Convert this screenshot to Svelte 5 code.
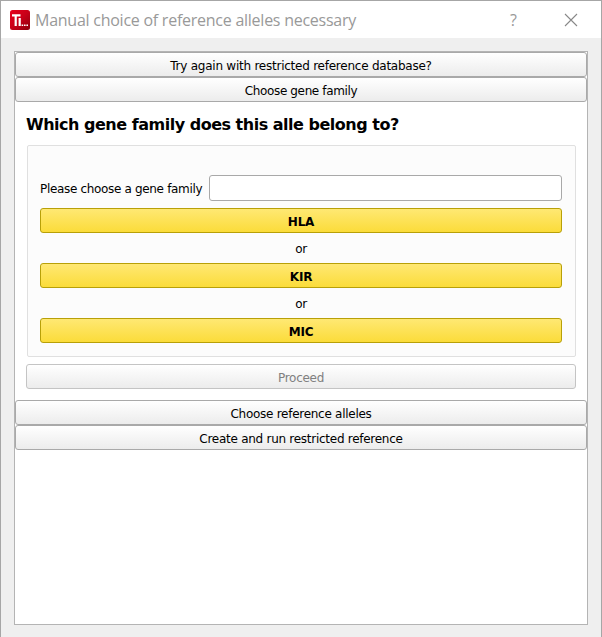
<script>
  const families = ['HLA', 'KIR', 'MIC'];
</script>

<div class="window">
  <header class="titlebar">
    <svg class="logo" width="20" height="20" viewBox="0 0 20 20">
      <defs>
        <linearGradient id="red" x1="0" y1="0" x2="1" y2="1">
          <stop offset="0" stop-color="#e8001c" />
          <stop offset=".5" stop-color="#c80018" />
          <stop offset="1" stop-color="#8c000c" />
        </linearGradient>
      </defs>
      <rect width="20" height="20" rx="2.5" fill="url(#red)" />
      <path d="M2 5.3H10.5M5.7 5V16M9.7 8V16" fill="none" stroke="#fff" stroke-width="2.2" />
      <path d="M11.6 15.2H13.2M14 15.2H15.6M16.4 15.2H18" stroke="#fff" stroke-width="1.6" />
    </svg>
    <span class="title">Manual choice of reference alleles necessary</span>
    <span class="help">?</span>
    <svg class="close" width="14" height="14" viewBox="0 0 14 14">
      <path d="M1 1L13 13M13 1L1 13" stroke="#888" stroke-width="1.1" />
    </svg>
  </header>
  <main class="toolbox">
    <button class="tab"><span class="t1">Try again with restricted reference database?</span></button>
    <button class="tab"><span class="t2">Choose gene family</span></button>
    <section class="page">
      <h1>Which gene family does this alle belong to?</h1>
      <div class="group">
        <label class="field"><span class="t3">Please choose a gene family</span><input type="text" /></label>
        {#each families as family, i}
          {#if i > 0}<div class="or">or</div>{/if}
          <button class="family">{family}</button>
        {/each}
      </div>
      <button class="proceed" disabled>Proceed</button>
    </section>
    <button class="tab"><span class="t4">Choose reference alleles</span></button>
    <button class="tab"><span class="t5">Create and run restricted reference</span></button>
  </main>
</div>

<style>
  :global(body) {
    margin: 0;
    overflow: hidden;
  }
  * {
    box-sizing: border-box;
  }
  .window {
    width: 602px;
    height: 637px;
    display: flex;
    flex-direction: column;
    background: #efefef;
    border: 1px solid #a6a6a6;
    border-bottom: 0;
    font: 12px/15px 'DejaVu Sans', sans-serif;
    letter-spacing: -0.27px;
    color: #000;
  }
  .titlebar {
    height: 37px;
    flex: none;
    display: flex;
    align-items: center;
    padding: 0 23px 0 9px;
    background: #fff;
    color: #999;
    font: 16px/22px 'Open Sans', 'Noto Sans', sans-serif;
  }
  .title {
    margin-left: 5px;
    flex: 1;
    white-space: nowrap;
    letter-spacing: -0.25px;
  }
  .help {
    width: 9px;
    margin-right: 45px;
  }
  .toolbox {
    margin: 13px 13px 12px;
    flex: 1;
    background: #fff;
    border: 1px solid #b4b4b4;
    display: flex;
    flex-direction: column;
  }
  button {
    display: block;
    width: 100%;
    height: 25px;
    flex: none;
    margin: 0;
    padding: 3px 0 0;
    border: 1px solid #a9a9a9;
    border-radius: 3px;
    background: linear-gradient(#fff, #ececec);
    font: inherit;
    letter-spacing: inherit;
    color: #000;
    text-align: center;
    white-space: nowrap;
  }
  .t1 {
    letter-spacing: -0.24px;
  }
  .t2 {
    letter-spacing: -0.37px;
  }
  .page {
    height: 298px;
    padding: 12px 11px 0;
    display: flex;
    flex-direction: column;
  }
  h1 {
    margin: 0 0 10px;
    height: 21px;
    font: bold 16px/21px 'DejaVu Sans', sans-serif;
    letter-spacing: -0.49px;
    white-space: nowrap;
  }
  .group {
    height: 212px;
    margin-left: 1px;
    padding: 29px 13px 0 12px;
    border: 1px solid #e0e0e0;
    border-radius: 2px;
    background: #fcfcfc;
  }
  .field {
    display: flex;
    align-items: center;
    height: 26px;
    margin-bottom: 7px;
  }
  .t3 {
    width: 169px;
    flex: none;
    padding-top: 2px;
    white-space: nowrap;
    letter-spacing: -0.33px;
  }
  input {
    flex: 1;
    min-width: 0;
    height: 26px;
    border: 1px solid #a9a9a9;
    border-radius: 3px;
    background: #fff;
  }
  .family {
    border-color: #b8a008;
    background: linear-gradient(#ffe873, #fbdc3a);
    font-weight: bold;
    letter-spacing: -0.2px;
  }
  .or {
    height: 30px;
    line-height: 32px;
    text-align: center;
  }
  .proceed {
    margin-top: 7px;
    border-color: #c4c4c4;
    color: #808080;
  }
</style>
